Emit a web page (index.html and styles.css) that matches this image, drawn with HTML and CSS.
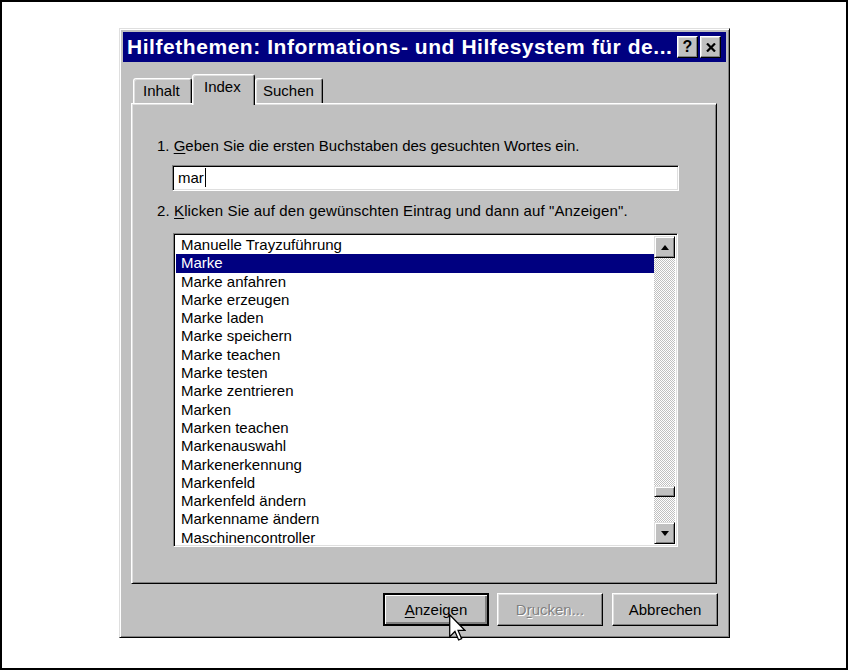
FILE: index.html
```html
<!DOCTYPE html>
<html lang="de">
	<head>
		<meta charset="utf-8" />
		<title>Hilfethemen</title>
		<link rel="stylesheet" href="styles.css">
	</head>
	<body>
		<div class="frame">
			<div class="dialog">
				<div class="titlebar">
					<span class="title">Hilfethemen: Informations- und Hilfesystem für de...</span>
					<span class="capbtn help">?</span>
					<span class="capbtn close">
						<svg width="10" height="9" viewBox="0 0 10 9"><path d="M1 0.5 L9 8.5 M9 0.5 L1 8.5" stroke="#000" stroke-width="2.2" fill="none"/></svg>
					</span>
				</div>

				<div class="body">
					<div class="tabs">
						<div class="tab">Inhalt</div>
						<div class="tab active">Index</div>
						<div class="tab">Suchen</div>
					</div>
					<div class="panel">
						<div class="label first">1. <u>G</u>eben Sie die ersten Buchstaben des gesuchten Wortes ein.</div>
						<div class="input">mar<span class="caret"></span></div>
						<div class="label second">2. <u>K</u>licken Sie auf den gewünschten Eintrag und dann auf "Anzeigen".</div>
						<div class="listbox">
							<div class="items">
								<div class="item">Manuelle Trayzuführung</div>
								<div class="item selected">Marke</div>
								<div class="item">Marke anfahren</div>
								<div class="item">Marke erzeugen</div>
								<div class="item">Marke laden</div>
								<div class="item">Marke speichern</div>
								<div class="item">Marke teachen</div>
								<div class="item">Marke testen</div>
								<div class="item">Marke zentrieren</div>
								<div class="item">Marken</div>
								<div class="item">Marken teachen</div>
								<div class="item">Markenauswahl</div>
								<div class="item">Markenerkennung</div>
								<div class="item">Markenfeld</div>
								<div class="item">Markenfeld ändern</div>
								<div class="item">Markenname ändern</div>
								<div class="item">Maschinencontroller</div>
							</div>
							<div class="scrollbar">
								<div class="sbtn"><span class="arrow up"></span></div>
								<div class="track"><div class="thumb"></div></div>
								<div class="sbtn"><span class="arrow down"></span></div>
							</div>
						</div>
					</div>
					<div class="buttons">
						<div class="btn default"><u>A</u>nzeigen</div>
						<div class="btn disabled">D<u>r</u>ucken...</div>
						<div class="btn">Abbrechen</div>
					</div>
				</div>
			</div>

			<svg class="cursor" width="17" height="27" viewBox="0 0 12 19">
				<path d="M0.5 0.5 V16 L4.2 12.3 L6.8 18.3 L8.9 17.4 L6.4 11.6 H11.3 Z" fill="#fff" stroke="#000" stroke-width="0.9" stroke-linejoin="miter"/>
			</svg>
		</div>
	</body>
</html>
```

FILE: styles.css
```css
* {
	box-sizing: border-box;
}
body {
	margin: 0;
	background: #fff;
	font-family: "Liberation Sans", Arial, sans-serif;
	font-size: 15px;
	color: #000;
}
u {
	text-underline-offset: 2px;
}

.frame {
	position: relative;
	width: 848px;
	height: 670px;
	border: 2px solid #000;
	padding: 26px 0 0 117px;
}

/* window */
.dialog {
	width: 611px;
	height: 610px;
	background: #c0c0c0;
	border: 1px solid;
	border-color: #dfdfdf #000 #000 #dfdfdf;
	box-shadow: inset 1px 1px #fff, inset -1px -1px #808080;
	padding: 3px;
	display: flex;
	flex-direction: column;
}
.titlebar {
	height: 30px;
	background: #000080;
	color: #fff;
	display: flex;
	align-items: center;
	padding: 0 5px 0 4px;
}
.title {
	flex: 1;
	font-weight: bold;
	font-size: 21px;
	letter-spacing: 0.55px;
	white-space: nowrap;
}
.capbtn {
	width: 21px;
	height: 22px;
	display: flex;
	align-items: center;
	justify-content: center;
	background: #c0c0c0;
	color: #000;
	font-weight: bold;
	font-size: 16px;
	border: 1px solid;
	border-color: #fff #000 #000 #fff;
	box-shadow: inset -1px -1px #808080, inset 1px 1px #dfdfdf;
}
.capbtn.close {
	margin-left: 2px;
}

.body {
	flex: 1;
	display: flex;
	flex-direction: column;
	padding: 12px 9px 0 8px;
}

/* tabs */
.tabs {
	display: flex;
	align-items: flex-end;
	padding-left: 2px;
	height: 29px;
}
.tab {
	height: 25px;
	padding: 3px 0 0 9px;
	border: 1px solid;
	border-bottom: none;
	border-color: #fff #000 transparent #fff;
	border-radius: 3px 3px 0 0;
	box-shadow: inset 1px 1px #dfdfdf, inset -1px 0 #808080;
	background: #c0c0c0;
}
.tab:nth-child(1) {
	width: 59px;
}
.tab:nth-child(3) {
	width: 68px;
	padding-left: 7px;
}
.tab.active {
	position: relative;
	z-index: 1;
	width: 63px;
	height: 31px;
	margin-bottom: -2px;
	padding: 3px 0 0 11px;
}

.panel {
	height: 481px;
	border: 1px solid;
	border-color: #fff #000 #000 #fff;
	box-shadow: inset 1px 1px #dfdfdf, inset -1px -1px #808080;
	padding: 33px 0 0 0;
}
.label {
	line-height: 18px;
	padding-left: 25px;
	white-space: nowrap;
}
.label.second {
	margin-top: 11px;
	letter-spacing: 0.12px;
}

.input {
	margin: 10px 0 0 40px;
	width: 507px;
	height: 26px;
	background: #fff;
	border: 1px solid;
	border-color: #808080 #fff #fff #808080;
	box-shadow: inset 1px 1px #000, inset -1px -1px #dfdfdf;
	padding: 3px 0 0 5px;
	line-height: 18px;
	display: flex;
	align-items: flex-start;
}
.caret {
	width: 1px;
	height: 19px;
	background: #000;
	margin: -1px 0 0 1px;
}

/* list */
.listbox {
	margin: 13px 0 0 41px;
	width: 505px;
	height: 314px;
	background: #fff;
	border: 1px solid;
	border-color: #808080 #fff #fff #808080;
	box-shadow: inset 1px 1px #000, inset -1px -1px #dfdfdf;
	padding: 1px;
	display: flex;
}
.items {
	flex: 1;
	overflow: hidden;
	margin-left: 1px;
	margin-top: 1px;
}
.item {
	height: 18.3px;
	line-height: 18.3px;
	padding-left: 5px;
	white-space: nowrap;
}
.item.selected {
	background: #000080;
	color: #fff;
}
.scrollbar {
	width: 21px;
	display: flex;
	flex-direction: column;
	margin: 1px 1px 1px 0;
}
.sbtn {
	height: 22px;
	background: #c0c0c0;
	border: 1px solid;
	border-color: #dfdfdf #000 #000 #dfdfdf;
	box-shadow: inset 1px 1px #fff, inset -1px -1px #808080;
	display: flex;
	align-items: center;
	justify-content: center;
}
.arrow {
	width: 0;
	height: 0;
	border-left: 4px solid transparent;
	border-right: 4px solid transparent;
}
.arrow.up {
	border-bottom: 5px solid #000;
}
.arrow.down {
	border-top: 5px solid #000;
}
.track {
	flex: 1;
	background: repeating-conic-gradient(#fff 0 25%, #c0c0c0 0 50%) 0 0 / 2px 2px;
}
.thumb {
	margin-top: 228px;
	height: 11px;
	background: #c0c0c0;
	border: 1px solid;
	border-color: #dfdfdf #000 #000 #dfdfdf;
	box-shadow: inset 1px 1px #fff, inset -1px -1px #808080;
}

/* buttons */
.buttons {
	display: flex;
	justify-content: flex-end;
	gap: 9px;
	margin: 9px -1px 0 0;
}
.btn {
	width: 106px;
	height: 33px;
	display: flex;
	align-items: center;
	justify-content: center;
	border: 1px solid;
	border-color: #fff #000 #000 #fff;
	box-shadow: inset -1px -1px #808080, inset 1px 1px #dfdfdf;
	padding-bottom: 1px;
}
.btn.default {
	border: 2px solid #000;
	box-shadow: inset 1px 1px #fff, inset -1px -1px #808080, inset -2px -2px #808080;
	margin-right: -1px;
}
.btn.disabled {
	color: #808080;
	text-shadow: 1px 1px #fff;
}

.cursor {
	position: absolute;
	left: 447px;
	top: 612px;
}
```
